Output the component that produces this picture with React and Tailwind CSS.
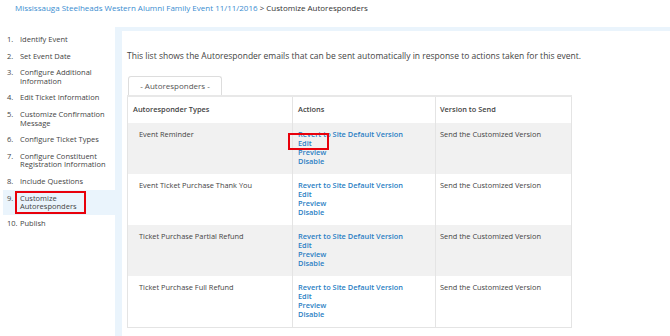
const steps = [
  ['1.', ['Identify Event']],
  ['2.', ['Set Event Date']],
  ['3.', ['Configure Additional', 'Information']],
  ['4.', ['Edit Ticket Information']],
  ['5.', ['Customize Confirmation', 'Message']],
  ['6.', ['Configure Ticket Types']],
  ['7.', ['Configure Constituent', 'Registration Information']],
  ['8.', ['Include Questions']],
  ['9.', ['Customize', 'Autoresponders'], true],
  ['10.', ['Publish']],
]

const rows = [
  'Event Reminder',
  'Event Ticket Purchase Thank You',
  'Ticket Purchase Partial Refund',
  'Ticket Purchase Full Refund',
]

function Sidebar() {
  return (
    <aside className="w-[115px] shrink-0 pt-[4px] pl-[3px]">
      <ol>
        {steps.map(([num, lines, active]) => (
          <li
            key={num}
            className={`flex py-[4px] pl-[4px] text-[7.5px] leading-[8.6px] text-[#444] ${active ? 'bg-[#eaf4fc]' : ''}`}
          >
            <span className="w-[13px] shrink-0">{num}</span>
            <span className="relative">
              {lines.map((l) => (
                <span key={l} className="block whitespace-nowrap">{l}</span>
              ))}
              {active && (
                <span className="absolute left-[-5px] top-[-3px] w-[71px] h-[23px] border-2 border-[#e8000b]" />
              )}
            </span>
          </li>
        ))}
      </ol>
    </aside>
  )
}

function Actions({ boxed }) {
  const links = ['Revert to Site Default Version', 'Edit', 'Preview', 'Disable']
  return (
    <div className="flex flex-col items-start">
      {links.map((l) => (
        <a key={l} href="#" className="relative font-semibold text-[#2c7fc4] leading-[9px]">
          {l}
          {boxed && l === 'Edit' && (
            <span className="absolute left-[-10px] top-[-6px] w-[41px] h-[17px] border-[2.5px] border-[#e8000b]" />
          )}
        </a>
      ))}
    </div>
  )
}

export default function App() {
  return (
    <div className="w-[670px] h-[336px] overflow-hidden bg-white font-['Open_Sans',sans-serif]">
      <div className="h-[27px] pl-[15px] pt-[3px] text-[8px] leading-[10px]">
        <a href="#" className="text-[#3b8dd0]">Mississauga Steelheads Western Alumni Family Event 11/11/2016</a>
        <span className="text-[#333]"> &gt; Customize Autoresponders</span>
      </div>

      <div className="flex h-[309px]">
        <Sidebar />

        <main className="flex-1 bg-[#eaf4fc] pl-[7px] pt-[4px]">
          <div className="h-full bg-white pl-[5px] pt-[20px]">
            <p className="text-[8.5px] leading-[10px] text-[#444]">
              This list shows the Autoresponder emails that can be sent automatically in response to actions taken for this event.
            </p>

            <div className="mt-[15px] ml-[1px] w-[94px] h-[19px] flex items-center justify-center border border-b-0 border-[#ddd] rounded-t-[3px] text-[8px] text-[#555]">
              - Autoresponders -
            </div>

            <table className="w-[445px] border-collapse border border-[#e4e4e4] text-[7.4px] text-[#444]">
              <thead>
                <tr className="h-[27px] border-t-[2px] border-[#e8e8e8]">
                  <th className="w-[165px] pl-[5px] text-left font-semibold">Autoresponder Types</th>
                  <th className="w-[143px] pl-[5px] text-left font-semibold border-l border-[#e4e4e4]">Actions</th>
                  <th className="pl-[4px] text-left font-semibold border-l border-[#e4e4e4]">Version to Send</th>
                </tr>
              </thead>
              <tbody>
                {rows.map((r, i) => (
                  <tr key={r} className={`h-[51px] align-top ${i % 2 === 0 ? 'bg-[#f1f1f1]' : 'bg-white'}`}>
                    <td className="pl-[11px] pt-[6.5px] leading-[9px]">{r}</td>
                    <td className="pl-[5px] pt-[6.5px] border-l border-[#e4e4e4]">
                      <Actions boxed={i === 0} />
                    </td>
                    <td className="pl-[4px] pt-[6.5px] leading-[9px] border-l border-[#e4e4e4]">Send the Customized Version</td>
                  </tr>
                ))}
              </tbody>
            </table>
          </div>
        </main>
      </div>
    </div>
  )
}
